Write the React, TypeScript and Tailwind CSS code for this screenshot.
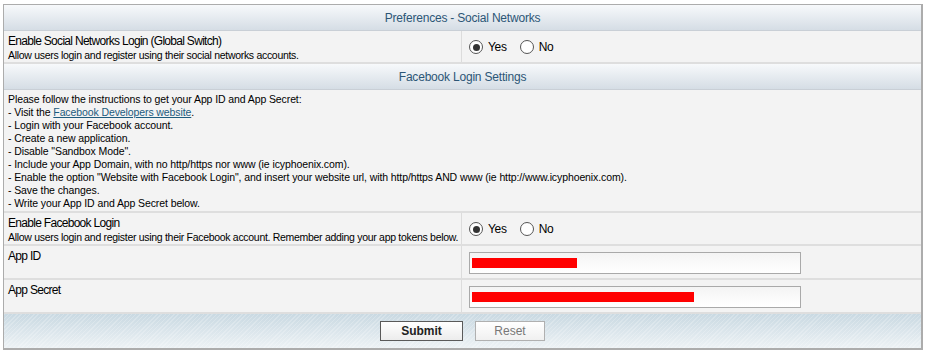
const font = "font-['Liberation_Sans',Arial,sans-serif]";

function Radio({ checked }: { checked?: boolean }) {
  return (
    <span className="relative inline-flex h-[14px] w-[14px] items-center justify-center rounded-full border border-[#555] bg-white">
      {checked && <span className="h-[7px] w-[7px] rounded-full bg-[#333]" />}
    </span>
  );
}

function YesNo() {
  return (
    <div className="flex items-center gap-[5px] text-[12px] tracking-[-0.3px] text-black">
      <Radio checked />
      <span className="mr-[8px]">Yes</span>
      <Radio />
      <span>No</span>
    </div>
  );
}

function Header({ title }: { title: string }) {
  return (
    <div className="flex h-[26px] items-center justify-center border-b border-[#c9cfd6] bg-[linear-gradient(to_bottom,#f7f9fb,#d5dde5)] text-[12px] tracking-[-0.2px] text-[#2c5676]">
      {title}
    </div>
  );
}

function Row({
  label,
  desc,
  h,
  children,
}: {
  label: string;
  desc?: string;
  h: string;
  children: React.ReactNode;
}) {
  return (
    <div className={`flex ${h} border-b-2 border-[#dedede] bg-[#f3f3f3]`}>
      <div className="w-[458px] border-r border-[#dcdcdc] px-[4px] pt-[3px]">
        <div className="text-[12px] leading-[15px] tracking-[-0.7px] text-black">{label}</div>
        {desc && (
          <div className="whitespace-nowrap text-[10.5px] leading-[13px] tracking-[-0.3px] text-black">
            {desc}
          </div>
        )}
      </div>
      <div className="flex flex-1 pl-[7px]">{children}</div>
    </div>
  );
}

function Secret({ bar }: { bar: string }) {
  return (
    <div className="mt-[6px] flex h-[22px] w-[332px] items-center border border-[#a9a9a9] bg-[linear-gradient(to_bottom,#f4f4f4,#ffffff)] px-[2px]">
      <div className={`h-[10px] ${bar} bg-[#ff0000]`} />
    </div>
  );
}

export default function App() {
  const steps = [
    "- Login with your Facebook account.",
    "- Create a new application.",
    '- Disable "Sandbox Mode".',
    "- Include your App Domain, with no http/https nor www (ie icyphoenix.com).",
    '- Enable the option "Website with Facebook Login", and insert your website url, with http/https AND www (ie http://www.icyphoenix.com).',
    "- Save the changes.",
    "- Write your App ID and App Secret below.",
  ];

  return (
    <div className={`min-h-[359px] bg-white pl-[3px] pt-[4px] ${font}`}>
      <div className="w-[920px] border border-r-2 border-b-2 border-[#acacac]">
        <Header title="Preferences - Social Networks" />
        <Row
          h="h-[33px]"
          label="Enable Social Networks Login (Global Switch)"
          desc="Allow users login and register using their social networks accounts."
        >
          <div className="pt-[7px]">
            <YesNo />
          </div>
        </Row>
        <Header title="Facebook Login Settings" />
        <div className="h-[123px] border-b-2 border-[#dedede] bg-[#f3f3f3] px-[4px] pt-[3px] text-[10.5px] leading-[13px] tracking-[-0.1px] text-black">
          <div>Please follow the instructions to get your App ID and App Secret:</div>
          <div>
            - Visit the{" "}
            <a href="#" className="text-[#1d5b7e] underline">
              Facebook Developers website
            </a>
            .
          </div>
          {steps.map((s) => (
            <div key={s}>{s}</div>
          ))}
        </div>
        <Row
          h="h-[33px]"
          label="Enable Facebook Login"
          desc="Allow users login and register using their Facebook account. Remember adding your app tokens below."
        >
          <div className="pt-[7px]">
            <YesNo />
          </div>
        </Row>
        <Row h="h-[34px]" label="App ID">
          <Secret bar="w-[105px]" />
        </Row>
        <Row h="h-[34px]" label="App Secret">
          <Secret bar="w-[222px]" />
        </Row>
        <div className="flex h-[34px] items-center justify-center gap-[12px] bg-[repeating-linear-gradient(135deg,rgba(255,255,255,0.22)_0_1px,transparent_1px_3px),linear-gradient(to_bottom,#c9d9e2,#edf2f5)]">
          <button className="h-[20px] w-[83px] border border-[#5a5a5a] bg-[linear-gradient(to_bottom,#ffffff,#ececec)] text-[12px] font-bold text-[#222]">
            Submit
          </button>
          <button className="h-[20px] w-[70px] border border-[#b0b0b0] bg-[linear-gradient(to_bottom,#ffffff,#f0f0f0)] text-[12px] text-[#777]">
            Reset
          </button>
        </div>
      </div>
    </div>
  );
}
